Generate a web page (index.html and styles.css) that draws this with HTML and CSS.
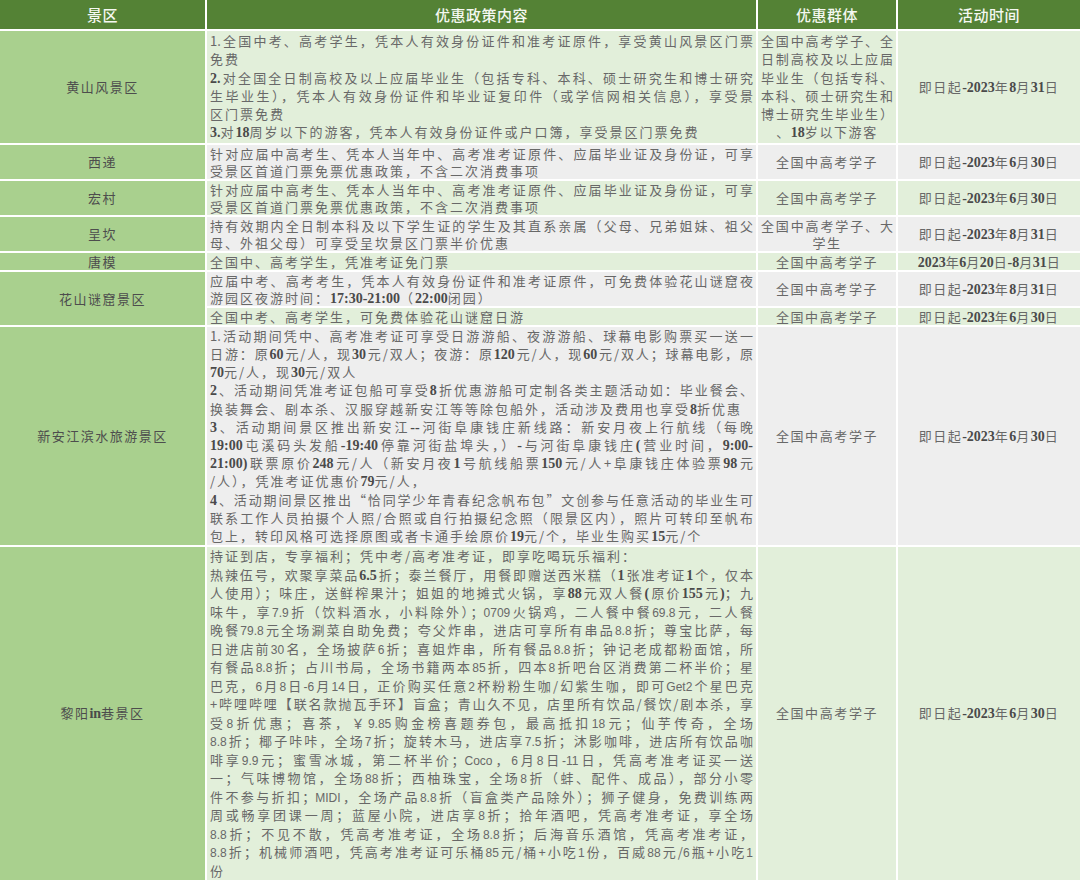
FILE: index.html
```html
<!DOCTYPE html>
<html lang="zh-CN">
<head>
<meta charset="utf-8">
<title>中高考学子优惠政策</title>
<link rel="stylesheet" href="styles.css">
</head>
<body>
<table class="grid">
  <colgroup>
    <col class="c1"><col class="c2"><col class="c3"><col class="c4">
  </colgroup>
  <thead>
    <tr class="head">
      <th>景区</th><th>优惠政策内容</th><th>优惠群体</th><th>活动时间</th>
    </tr>
  </thead>
  <tbody>
    <tr class="r-a">
      <td class="area">黄山风景区</td>
      <td class="policy">
        <span class="ln j">1.全国中考、高考学生，凭本人有效身份证件和准考证原件，享受黄山风景区门票</span>
        <span class="ln">免费</span>
        <span class="ln j"><b>2.</b>对全国全日制高校及以上应届毕业生（包括专科、本科、硕士研究生和博士研究</span>
        <span class="ln j">生毕业生），凭本人有效身份证件和毕业证复印件（或学信网相关信息），享受景</span>
        <span class="ln">区门票免费</span>
        <span class="ln"><b>3.</b>对<b>18</b>周岁以下的游客，凭本人有效身份证件或户口簿，享受景区门票免费</span>
      </td>
      <td class="group">
        <span class="ln j">全国中高考学子、全</span>
        <span class="ln j">日制高校及以上应届</span>
        <span class="ln j">毕业生（包括专科、</span>
        <span class="ln j">本科、硕士研究生和</span>
        <span class="ln j">博士研究生毕业生）</span>
        <span class="ln">、<b>18</b>岁以下游客</span>
      </td>
      <td class="time">即日起<b>-2023</b>年<b>8</b>月<b>31</b>日</td>
    </tr>
    <tr class="r-gray">
      <td class="area">西递</td>
      <td class="policy">
        <span class="ln j">针对应届中高考生、凭本人当年中、高考准考证原件、应届毕业证及身份证，可享</span>
        <span class="ln">受景区首道门票免票优惠政策，不含二次消费事项</span>
      </td>
      <td class="group">全国中高考学子</td>
      <td class="time">即日起<b>-2023</b>年<b>6</b>月<b>30</b>日</td>
    </tr>
    <tr>
      <td class="area">宏村</td>
      <td class="policy">
        <span class="ln j">针对应届中高考生、凭本人当年中、高考准考证原件、应届毕业证及身份证，可享</span>
        <span class="ln">受景区首道门票免票优惠政策，不含二次消费事项</span>
      </td>
      <td class="group">全国中高考学子</td>
      <td class="time">即日起<b>-2023</b>年<b>6</b>月<b>30</b>日</td>
    </tr>
    <tr class="r-gray">
      <td class="area">呈坎</td>
      <td class="policy">
        <span class="ln j">持有效期内全日制本科及以下学生证的学生及其直系亲属（父母、兄弟姐妹、祖父</span>
        <span class="ln">母、外祖父母）可享受呈坎景区门票半价优惠</span>
      </td>
      <td class="group">
        <span class="ln j">全国中高考学子、大</span>
        <span class="ln">学生</span>
      </td>
      <td class="time">即日起<b>-2023</b>年<b>8</b>月<b>31</b>日</td>
    </tr>
    <tr>
      <td class="area">唐模</td>
      <td class="policy"><span class="ln">全国中、高考学生，凭准考证免门票</span></td>
      <td class="group">全国中高考学子</td>
      <td class="time tight"><b>2023</b>年<b>6</b>月<b>20</b>日<b>-8</b>月<b>31</b>日</td>
    </tr>
    <tr class="r-gray">
      <td class="area area-green" rowspan="2">花山谜窟景区</td>
      <td class="policy">
        <span class="ln j">应届中考、高考考生，凭本人有效身份证件和准考证原件，可免费体验花山谜窟夜</span>
        <span class="ln">游园区夜游时间：<b>17:30-21:00</b>（<b>22:00</b>闭园）</span>
      </td>
      <td class="group">全国中高考学子</td>
      <td class="time">即日起<b>-2023</b>年<b>8</b>月<b>31</b>日</td>
    </tr>
    <tr>
      <td class="policy"><span class="ln">全国中考、高考学生，可免费体验花山谜窟日游</span></td>
      <td class="group">全国中高考学子</td>
      <td class="time">即日起<b>-2023</b>年<b>6</b>月<b>30</b>日</td>
    </tr>
    <tr class="r-gray r-b">
      <td class="area">新安江滨水旅游景区</td>
      <td class="policy">
        <span class="ln j">1.活动期间凭中、高考准考证可享受日游游船、夜游游船、球幕电影购票买一送一</span>
        <span class="ln j">日游：原<b>60</b>元/人，现<b>30</b>元/双人；夜游：原<b>120</b>元/人，现<b>60</b>元/双人；球幕电影，原</span>
        <span class="ln"><b>70</b>元/人，现<b>30</b>元/双人</span>
        <span class="ln j"><b>2</b>、活动期间凭准考证包船可享受<b>8</b>折优惠游船可定制各类主题活动如：毕业餐会、</span>
        <span class="ln">换装舞会、剧本杀、汉服穿越新安江等等除包船外，活动涉及费用也享受<b>8</b>折优惠</span>
        <span class="ln j"><b>3</b>、活动期间景区推出新安江<b>--</b>河街阜康钱庄新线路：新安月夜上行航线（每晚</span>
        <span class="ln j"><b>19:00</b>屯溪码头发船<b>-19:40</b>停靠河街盐埠头，）<b>-</b>与河街阜康钱庄<b>(</b>营业时间，<b>9:00-</b></span>
        <span class="ln j"><b>21:00)</b>联票原价<b>248</b>元/人（新安月夜<b>1</b>号航线船票<b>150</b>元/人+阜康钱庄体验票<b>98</b>元</span>
        <span class="ln">/人），凭准考证优惠价<b>79</b>元/人，</span>
        <span class="ln j"><b>4</b>、活动期间景区推出“恰同学少年青春纪念帆布包”文创参与任意活动的毕业生可</span>
        <span class="ln j">联系工作人员拍摄个人照/合照或自行拍摄纪念照（限景区内），照片可转印至帆布</span>
        <span class="ln">包上，转印风格可选择原图或者卡通手绘原价<b>19</b>元/个，毕业生购买<b>15</b>元/个</span>
      </td>
      <td class="group">全国中高考学子</td>
      <td class="time">即日起<b>-2023</b>年<b>6</b>月<b>30</b>日</td>
    </tr>
    <tr class="r-c">
      <td class="area">黎阳<b>in</b>巷景区</td>
      <td class="policy">
        <span class="ln">持证到店，专享福利；凭中考/高考准考证，即享吃喝玩乐福利：</span>
        <span class="ln j">热辣伍号，欢聚享菜品<b>6.5</b>折；泰兰餐厅，用餐即赠送西米糕（<b>1</b>张准考证<b>1</b>个，仅本</span>
        <span class="ln j">人使用）；味庄，送鲜榨果汁；姐姐的地摊式火锅，享<b>88</b>元双人餐<b>(</b>原价<b>155</b>元<b>)</b>；九</span>
        <span class="ln j">味牛，享<i>7.9</i>折（饮料酒水，小料除外）；<i>0709</i>火锅鸡，二人餐中餐<i>69.8</i>元，二人餐</span>
        <span class="ln j">晚餐<i>79.8</i>元全场涮菜自助免费；夸父炸串，进店可享所有串品<i>8.8</i>折；尊宝比萨，每</span>
        <span class="ln j">日进店前<i>30</i>名，全场披萨<i>6</i>折；喜姐炸串，所有餐品<i>8.8</i>折；钟记老成都粉面馆，所</span>
        <span class="ln j">有餐品<i>8.8</i>折；占川书局，全场书籍两本<i>85</i>折，四本<i>8</i>折吧台区消费第二杯半价；星</span>
        <span class="ln j">巴克，<i>6</i>月<i>8</i>日<i>-6</i>月<i>14</i>日，正价购买任意<i>2</i>杯粉粉生咖/幻紫生咖，即可<i>Get2</i>个星巴克</span>
        <span class="ln j">+哔哩哔哩【联名款抛瓦手环】盲盒；青山久不见，店里所有饮品/餐饮/剧本杀，享</span>
        <span class="ln j">受<i>8</i>折优惠；喜茶，￥<i>9.85</i>购金榜喜题券包，最高抵扣<i>18</i>元；仙芋传奇，全场</span>
        <span class="ln j"><i>8.8</i>折；椰子咔咔，全场<i>7</i>折；旋转木马，进店享<i>7.5</i>折；沐影咖啡，进店所有饮品咖</span>
        <span class="ln j">啡享<i>9.9</i>元；蜜雪冰城，第二杯半价；<i>Coco</i>，<i>6</i>月<i>8</i>日<i>-11</i>日，凭高考准考证买一送</span>
        <span class="ln j">一；气味博物馆，全场<i>88</i>折；西柚珠宝，全场<i>8</i>折（蚌、配件、成品），部分小零</span>
        <span class="ln j">件不参与折扣；<i>MIDI</i>，全场产品<i>8.8</i>折（盲盒类产品除外）；狮子健身，免费训练两</span>
        <span class="ln j">周或畅享团课一周；蓝屋小院，进店享<i>8</i>折；拾年酒吧，凭高考准考证，享全场</span>
        <span class="ln j"><i>8.8</i>折；不见不散，凭高考准考证，全场<i>8.8</i>折；后海音乐酒馆，凭高考准考证，</span>
        <span class="ln j"><i>8.8</i>折；机械师酒吧，凭高考准考证可乐桶<i>85</i>元/桶+小吃<i>1</i>份，百威<i>88</i>元/<i>6</i>瓶+小吃<i>1</i></span>
        <span class="ln">份</span>
      </td>
      <td class="group">全国中高考学子</td>
      <td class="time">即日起<b>-2023</b>年<b>6</b>月<b>30</b>日</td>
    </tr>
  </tbody>
</table>
</body>
</html>
```

FILE: styles.css
```css
html, body {
  margin: 0;
  padding: 0;
  background: #ffffff;
}

.grid {
  width: 1080px;
  table-layout: fixed;
  border-collapse: collapse;
  border: hidden;
  font-family: "Noto Sans CJK SC", "Liberation Serif", sans-serif;
  font-size: 13px;
  line-height: 17px;
  color: #686868;
}

.c1 { width: 206px; }
.c2 { width: 551px; }
.c3 { width: 140px; }
.c4 { width: 183px; }

.grid th,
.grid td {
  border: 2px solid #ffffff;
  padding: 0 3px;
  vertical-align: middle;
}

.head th {
  height: 29px;
  background: #548235;
  color: #f4f8f1;
  font-size: 15px;
  font-weight: 500;
  text-align: center;
  letter-spacing: 0.5px;
}

.grid td {
  background: #e2efda;
}

.grid .r-gray td {
  background: #eeeeee;
}

.grid td.area {
  background: #a9d08e;
  color: #4d4d4d;
  text-align: center;
  letter-spacing: 1.5px;
}

.policy {
  letter-spacing: 2px;
}

.group {
  text-align: center;
  letter-spacing: 1.6px;
  padding: 0 2px;
}

.time {
  text-align: center;
  letter-spacing: 1.5px;
}

.time.tight {
  letter-spacing: 0.6px;
}

.ln {
  display: block;
}

.ln.j {
  letter-spacing: 0;
  text-align: justify;
  text-align-last: justify;
}

.grid b {
  font-family: "Liberation Serif", serif;
  font-weight: 700;
  font-size: 14px;
  line-height: 0;
  letter-spacing: 0;
  color: #4a4a4a;
}

.grid i {
  font-style: normal;
  font-family: "Liberation Sans", sans-serif;
  font-size: 12px;
  line-height: 0;
  letter-spacing: 0;
}

.r-a td {
  line-height: 18.3px;
  padding-top: 1px;
  padding-bottom: 1px;
}

.r-b td {
  line-height: 18.2px;
}

.r-c td {
  line-height: 18.5px;
}
```
